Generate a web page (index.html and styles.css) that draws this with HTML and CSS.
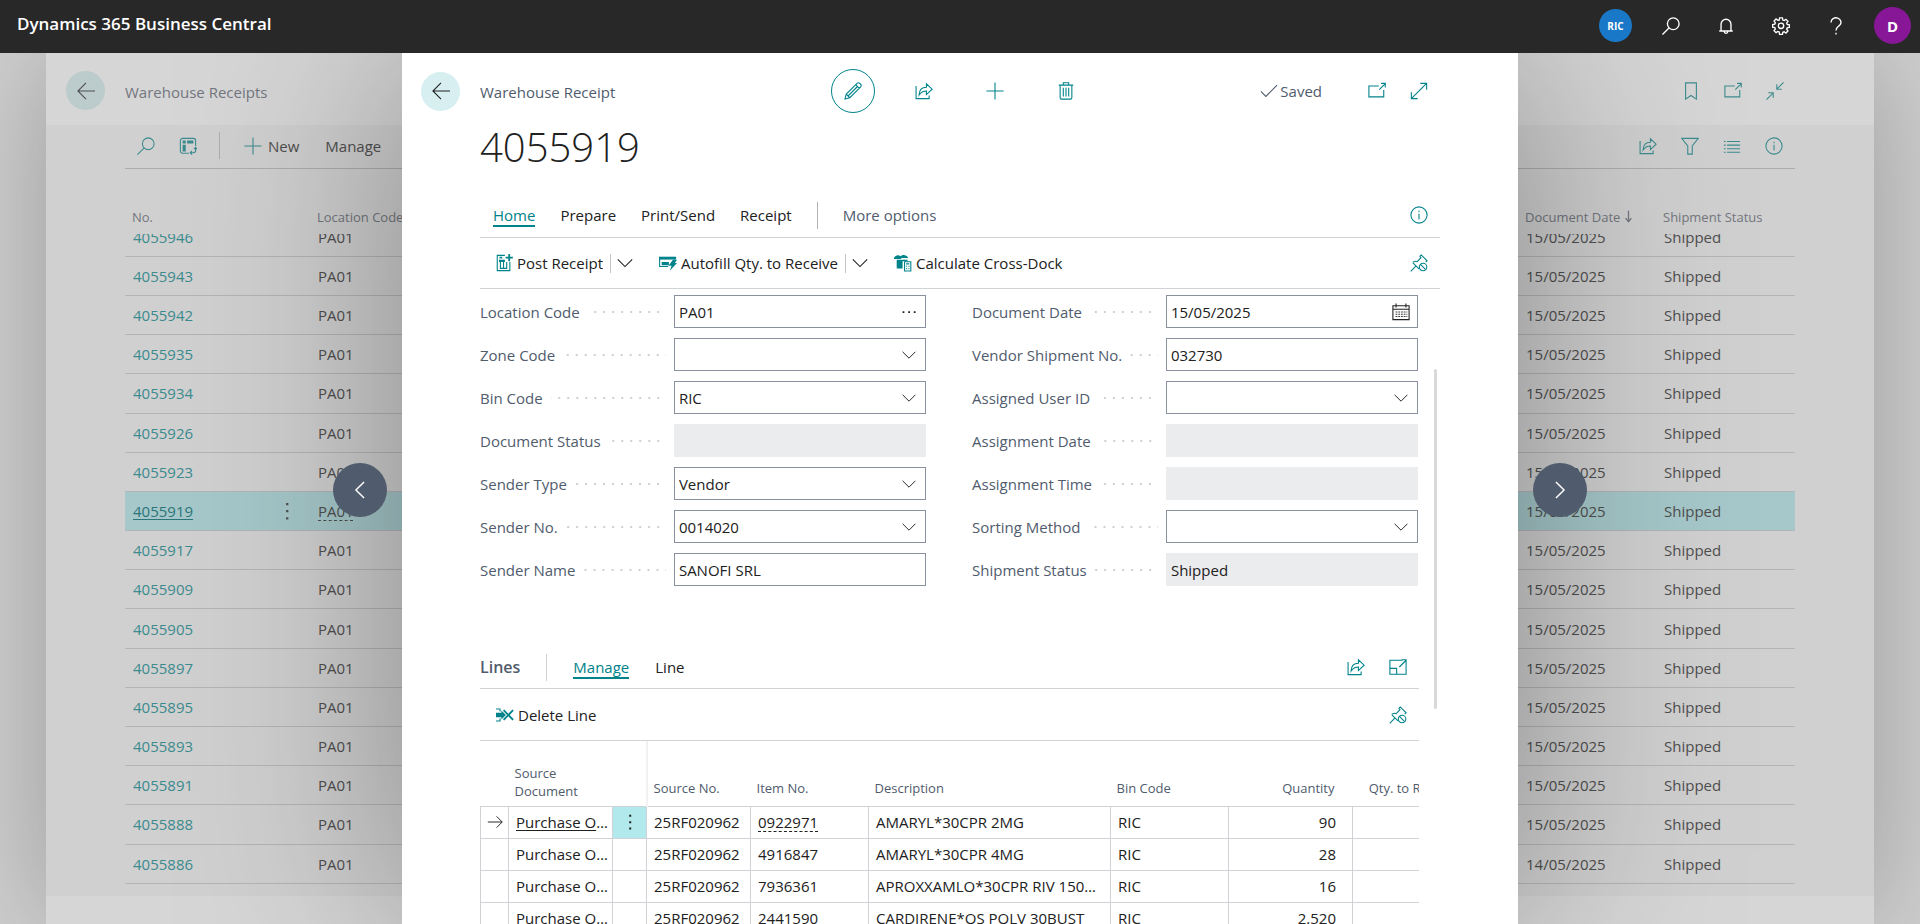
FILE: index.html
```html
<!doctype html>
<html lang="en">
<head>
  <meta charset="UTF-8">
  <title>Warehouse Receipt - 4055919 - Dynamics 365 Business Central</title>
  <meta name="viewport" content="width=device-width, initial-scale=1.0">
  <link rel="stylesheet" href="styles.css">
</head>
<body>

  <!-- icon sprite -->
  <svg class="sprite" aria-hidden="true">
    <symbol id="i-back" viewBox="0 0 20 20"><path d="M20 10H1M10 1 1 10l9 9"/></symbol>
    <symbol id="i-search" viewBox="0 0 20 20"><circle cx="12.500" cy="7.500" r="6.500"/><path d="M8 12 .500 19.500"/></symbol>
    <symbol id="i-bell" viewBox="0 0 20 20"><path d="M4.500 15.500V8a5.500 5.500 0 0 1 11 0v7.500M2.500 15.600h15M8 16.200a2 2 0 0 0 4 0"/></symbol>
    <symbol id="i-gear" viewBox="0 0 20 20"><path d="M8.400 1h3.200l.4 2.400 1.500.6 2-1.400 2.200 2.200-1.400 2 .6 1.500 2.400.4v3l-2.400.4-.6 1.500 1.400 2-2.200 2.200-2-1.400-1.500.6-.4 2.400H8.400L8 16.600 6.500 16l-2 1.400-2.200-2.200 1.400-2-.6-1.500-2.400-.4v-3l2.400-.4.6-1.500-1.400-2 2.200-2.200 2 1.400L8 3.400z"/><circle cx="10" cy="9.800" r="3"/></symbol>
    <symbol id="i-help" viewBox="0 0 20 20"><path d="M4.500 6a5.500 5 0 1 1 9.500 3.300c-2.500 2-4 2.700-4 5.700M10 17.500v2"/></symbol>
    <symbol id="i-analyse" viewBox="0 0 20 20"><path d="M11 18H4a2.500 2.500 0 0 1-2.500-2.500V4A2.500 2.500 0 0 1 4 1.500h12A2.500 2.500 0 0 1 18.500 4v6"/><path class="fill" d="M4 4h3.500v3.200H4zM9 4h7v3.200H9zM4 8.500h3.500V16H4z"/><path d="M18.500 12v3a2.500 2.500 0 0 1-2.500 2.500h-3M16.500 13.500l2-2 1.500 2M14.500 15.500l-2 2 2 2"/></symbol>
    <symbol id="i-plus" viewBox="0 0 20 20"><path d="M10 .500v19M.500 10h19"/></symbol>
    <symbol id="i-bookmark" viewBox="0 0 20 20"><path d="M4 1h12v18l-6-4-6 4z"/></symbol>
    <symbol id="i-popout" viewBox="0 0 20 20"><path d="M12 4.500H1v12h16.500V9M12.500 8.500l6.500-6.500M14.500 1.500h4.700v4.700"/></symbol>
    <symbol id="i-collapse" viewBox="0 0 20 20"><path d="M19.500.500 12 8M12 2.500V8h5.500M.500 19.500 8 12M2.500 12H8v5.500"/></symbol>
    <symbol id="i-expand" viewBox="0 0 20 20"><path d="m1.500 18.500 17-17M11.500 1.500h7v7M1.500 11.500v7h7"/></symbol>
    <symbol id="i-share" viewBox="0 0 20 20"><path d="M1.200 4.500v14h14.500V15M4.500 14.500c.2-6 3-8.700 8.200-8.700V2l6.300 6-6.300 6v-4c-4 0-6 1-8.200 4.500z"/></symbol>
    <symbol id="i-filter" viewBox="0 0 20 20"><path d="M.800 1.500h18.400L12.500 10v9h-5v-9z"/></symbol>
    <symbol id="i-list" viewBox="0 0 20 20"><path d="M1 5h2M4.500 5H19M1 9h2M4.500 9H19M1 13h2M4.500 13H19M1 17h2M4.500 17H19"/></symbol>
    <symbol id="i-info" viewBox="0 0 20 20"><circle cx="10" cy="10" r="9"/><path d="M10 8.500V15M10 5.200V7"/></symbol>
    <symbol id="i-edit" viewBox="0 0 20 20"><path d="m1 19 1.500-5.500L14.500 1.500a2.100 2.100 0 0 1 3 0l1 1a2.100 2.100 0 0 1 0 3L6.500 17.500zM2.500 13.500l4 4M13 3l4 4M15 5 5 15"/></symbol>
    <symbol id="i-trash" viewBox="0 0 20 20"><path d="M2 3.500h16M7 3V.800h6V3M3.500 3.500v14a1.500 1.500 0 0 0 1.500 1.500h10a1.500 1.500 0 0 0 1.500-1.500v-14M7 6.500V16M10 6.500V16M13 6.500V16"/></symbol>
    <symbol id="i-check" viewBox="0 0 20 20"><path d="m1 10.500 5.500 5.500L19 3.500"/></symbol>
    <symbol id="i-chevron" viewBox="0 0 20 20"><path d="m2 6 8 8 8-8"/></symbol>
    <symbol id="i-prev" viewBox="0 0 20 20"><path d="m14.500 1-9 9 9 9"/></symbol>
    <symbol id="i-next" viewBox="0 0 20 20"><path d="m5.500 1 9 9-9 9"/></symbol>
    <symbol id="i-pin" viewBox="0 0 20 20"><path d="M.800 19.200 6.500 13.500M3 9.500c2-1.500 4-1.500 5-1l4.200-4.500L11 2.500 12.500 1 19 7.500 17.500 9M3 9.500l7 7"/><circle cx="14.500" cy="14.500" r="4.200"/><path d="m11.600 11.600 5.800 5.800"/></symbol>
    <symbol id="i-post" viewBox="0 0 20 20"><path d="M11 1.500H2.500v17h14V9"/><path d="M6 9v7h7V9M9.500 9v7"/><path class="fill" d="M5 3h3v2H5zM4.500 6.500h6.500V9H4.500zM14.800 0h2v3h3v2h-3v3h-2V5h-3V3h3z"/></symbol>
    <symbol id="i-autofill" viewBox="0 0 20 20"><path class="fill" d="M0 3h19v3.200H0z"/><path d="M.700 3.500v10.300h9.500"/><path class="fill" d="M3 9h8v3.500H3zM15.500 6.500H20L17.500 10H20l-8 8.500 2-5.500h-3.500z"/></symbol>
    <symbol id="i-crossdock" viewBox="0 0 20 20"><path class="fill" d="M0 4.500C1.500 1 5 .500 7.500 2.500 9.500.500 13.500.500 16 4.500H8v1H0zM3 6.500h12V8H9.500v8H3z"/><path d="M11.700 8.700h7v10.200h-7zM13.500 11h3.500M13.200 13.700h1.200M16 13.700h1.200M13.200 16.300h1.200M16 16.300h1.200"/></symbol>
    <symbol id="i-delline" viewBox="0 0 20 20"><path d="M0 3.300h5M0 16.700h5M4.500 3v3M4.500 14v3"/><path class="fill" d="M0 7.500h6V5l5 5-5 5v-2.500H0z"/><path class="thick" d="m8.500 4.500 10.500 11M19 4.500 8.500 15.500"/></symbol>
    <symbol id="i-enlarge" viewBox="0 0 20 20"><path d="M15 2.500H1v15.500h18V5M1 11.500h7.500V18M11.500 10 19 2.500M14 2h5v5"/></symbol>
    <symbol id="i-calendar" viewBox="0 0 20 20"><path d="M1 3h18v15.500H1zM1 7h18M4.500.500V5M15.500.500V5"/><path class="dotted" d="M4 10h13M4 12.500h13M4 15h13"/></symbol>
    <symbol id="i-row" viewBox="0 0 20 20"><path d="M1 10h18M12 3l7 7-7 7"/></symbol>
    <symbol id="i-more" viewBox="0 0 20 20"><path class="fill" d="M9 1h2.500v2.500H9zM9 9h2.500v2.500H9zM9 17h2.500v2.500H9z"/></symbol>
    <symbol id="i-ellipsis" viewBox="0 0 20 20"><path class="fill" d="M2 9h2.200v2.200H2zM9 9h2.200v2.200H9zM16 9h2.200v2.200H16z"/></symbol>
    <symbol id="i-sort" viewBox="0 0 20 20"><path class="thick" d="M10 1v16M5.500 12.500 10 18l4.500-5.500"/></symbol>
  </svg>

  <header class="topbar">
    <a class="brand" href="#">Dynamics 365 Business Central</a>
    <div class="topbar-tools">
      <button class="env">RIC</button>
      <button aria-label="Search"><svg class="icon"><use href="#i-search"/></svg></button>
      <button aria-label="Notifications"><svg class="icon"><use href="#i-bell"/></svg></button>
      <button aria-label="Settings"><svg class="icon"><use href="#i-gear"/></svg></button>
      <button aria-label="Help"><svg class="icon"><use href="#i-help"/></svg></button>
      <button class="avatar">D</button>
    </div>
  </header>

  <div class="stage">

    <!-- list page behind the card -->
    <section class="list-page">
      <div class="list-head">
        <button class="round-back" aria-label="Back"><svg class="icon"><use href="#i-back"/></svg></button>
        <span class="list-title">Warehouse Receipts</span>
        <div class="icon-group">
          <button aria-label="Bookmark"><svg class="icon"><use href="#i-bookmark"/></svg></button>
          <button aria-label="Open in new window"><svg class="icon"><use href="#i-popout"/></svg></button>
          <button aria-label="Collapse"><svg class="icon"><use href="#i-collapse"/></svg></button>
        </div>
      </div>
      <div class="list-body">
        <div class="list-bar">
          <button aria-label="Search list"><svg class="icon"><use href="#i-search"/></svg></button>
          <button aria-label="Analyse"><svg class="icon"><use href="#i-analyse"/></svg></button>
          <span class="divider"></span>
          <button class="with-text"><svg class="icon"><use href="#i-plus"/></svg>New</button>
          <button class="with-text">Manage</button>
          <div class="icon-group">
            <button aria-label="Share"><svg class="icon"><use href="#i-share"/></svg></button>
            <button aria-label="Filter"><svg class="icon"><use href="#i-filter"/></svg></button>
            <button aria-label="List view"><svg class="icon"><use href="#i-list"/></svg></button>
            <button aria-label="Info"><svg class="icon"><use href="#i-info"/></svg></button>
          </div>
        </div>
        <table class="list-table list-table-head">
          <colgroup><col class="c-no"><col class="c-menu"><col><col class="c-date"><col class="c-status"></colgroup>
          <thead>
            <tr><th>No.</th><th></th><th>Location Code</th><th>Document Date<svg class="icon sort"><use href="#i-sort"/></svg></th><th>Shipment Status</th></tr>
          </thead>
        </table>
        <div class="list-scroll">
          <table class="list-table list-table-rows">
            <colgroup><col class="c-no"><col class="c-menu"><col><col class="c-date"><col class="c-status"></colgroup>
            <tbody>
              <tr><td><a href="#">4055946</a></td><td></td><td>PA01</td><td>15/05/2025</td><td>Shipped</td></tr>
              <tr><td><a href="#">4055943</a></td><td></td><td>PA01</td><td>15/05/2025</td><td>Shipped</td></tr>
              <tr><td><a href="#">4055942</a></td><td></td><td>PA01</td><td>15/05/2025</td><td>Shipped</td></tr>
              <tr><td><a href="#">4055935</a></td><td></td><td>PA01</td><td>15/05/2025</td><td>Shipped</td></tr>
              <tr><td><a href="#">4055934</a></td><td></td><td>PA01</td><td>15/05/2025</td><td>Shipped</td></tr>
              <tr><td><a href="#">4055926</a></td><td></td><td>PA01</td><td>15/05/2025</td><td>Shipped</td></tr>
              <tr><td><a href="#">4055923</a></td><td></td><td>PA01</td><td>15/05/2025</td><td>Shipped</td></tr>
              <tr class="selected"><td><a href="#">4055919</a></td><td><button aria-label="Row menu"><svg class="icon"><use href="#i-more"/></svg></button></td><td><span class="lookup">PA01</span></td><td>15/05/2025</td><td>Shipped</td></tr>
              <tr><td><a href="#">4055917</a></td><td></td><td>PA01</td><td>15/05/2025</td><td>Shipped</td></tr>
              <tr><td><a href="#">4055909</a></td><td></td><td>PA01</td><td>15/05/2025</td><td>Shipped</td></tr>
              <tr><td><a href="#">4055905</a></td><td></td><td>PA01</td><td>15/05/2025</td><td>Shipped</td></tr>
              <tr><td><a href="#">4055897</a></td><td></td><td>PA01</td><td>15/05/2025</td><td>Shipped</td></tr>
              <tr><td><a href="#">4055895</a></td><td></td><td>PA01</td><td>15/05/2025</td><td>Shipped</td></tr>
              <tr><td><a href="#">4055893</a></td><td></td><td>PA01</td><td>15/05/2025</td><td>Shipped</td></tr>
              <tr><td><a href="#">4055891</a></td><td></td><td>PA01</td><td>15/05/2025</td><td>Shipped</td></tr>
              <tr><td><a href="#">4055888</a></td><td></td><td>PA01</td><td>15/05/2025</td><td>Shipped</td></tr>
              <tr><td><a href="#">4055886</a></td><td></td><td>PA01</td><td>14/05/2025</td><td>Shipped</td></tr>
            </tbody>
          </table>
        </div>
      </div>
    </section>

    <!-- card dialog -->
    <main class="card">
      <div class="card-head">
        <button class="round-back" aria-label="Back"><svg class="icon"><use href="#i-back"/></svg></button>
        <span class="caption">Warehouse Receipt</span>
        <div class="card-tools">
          <button class="tool edit" aria-label="Edit"><svg class="icon"><use href="#i-edit"/></svg></button>
          <button class="tool" aria-label="Share"><svg class="icon"><use href="#i-share"/></svg></button>
          <button class="tool" aria-label="New"><svg class="icon"><use href="#i-plus"/></svg></button>
          <button class="tool" aria-label="Delete"><svg class="icon"><use href="#i-trash"/></svg></button>
          <span class="saved"><svg class="icon"><use href="#i-check"/></svg>Saved</span>
          <div class="icon-group">
            <button aria-label="Open in new window"><svg class="icon"><use href="#i-popout"/></svg></button>
            <button aria-label="Expand"><svg class="icon"><use href="#i-expand"/></svg></button>
          </div>
        </div>
      </div>

      <div class="card-main">
        <h1>4055919</h1>

        <nav class="tabs">
          <button class="tab active">Home</button>
          <button class="tab">Prepare</button>
          <button class="tab">Print/Send</button>
          <button class="tab">Receipt</button>
          <span class="divider"></span>
          <button class="tab muted">More options</button>
          <button class="bar-end" aria-label="Info"><svg class="icon"><use href="#i-info"/></svg></button>
        </nav>

        <div class="actions">
          <button class="action"><svg class="icon"><use href="#i-post"/></svg>Post Receipt</button>
          <button class="split" aria-label="More posting actions"><svg class="icon"><use href="#i-chevron"/></svg></button>
          <button class="action"><svg class="icon"><use href="#i-autofill"/></svg>Autofill Qty. to Receive</button>
          <button class="split" aria-label="More autofill actions"><svg class="icon"><use href="#i-chevron"/></svg></button>
          <button class="action"><svg class="icon"><use href="#i-crossdock"/></svg>Calculate Cross-Dock</button>
          <button class="bar-end" aria-label="Unpin"><svg class="icon"><use href="#i-pin"/></svg></button>
        </div>

        <div class="card-scroll">
          <form class="fields">
            <div class="column">
              <div class="field">
                <span class="name"><label for="location">Location Code</label></span>
                <div class="box"><input id="location" type="text" value="PA01"><button type="button" aria-label="Look up"><svg class="icon"><use href="#i-ellipsis"/></svg></button></div>
              </div>
              <div class="field">
                <span class="name"><label for="zone">Zone Code</label></span>
                <div class="box"><input id="zone" type="text"><button type="button" aria-label="Look up"><svg class="icon"><use href="#i-chevron"/></svg></button></div>
              </div>
              <div class="field">
                <span class="name"><label for="bin">Bin Code</label></span>
                <div class="box"><input id="bin" type="text" value="RIC"><button type="button" aria-label="Look up"><svg class="icon"><use href="#i-chevron"/></svg></button></div>
              </div>
              <div class="field">
                <span class="name"><label for="docstatus">Document Status</label></span>
                <div class="box readonly"><input id="docstatus" type="text" readonly></div>
              </div>
              <div class="field">
                <span class="name"><label for="sendertype">Sender Type</label></span>
                <div class="box"><select id="sendertype"><option>Vendor</option></select><svg class="icon"><use href="#i-chevron"/></svg></div>
              </div>
              <div class="field">
                <span class="name"><label for="senderno">Sender No.</label></span>
                <div class="box"><input id="senderno" type="text" value="0014020"><button type="button" aria-label="Look up"><svg class="icon"><use href="#i-chevron"/></svg></button></div>
              </div>
              <div class="field">
                <span class="name"><label for="sendername">Sender Name</label></span>
                <div class="box"><input id="sendername" type="text" value="SANOFI SRL"></div>
              </div>
            </div>
            <div class="column">
              <div class="field">
                <span class="name"><label for="docdate">Document Date</label></span>
                <div class="box"><input id="docdate" type="text" value="15/05/2025"><button type="button" aria-label="Pick a date"><svg class="icon wide"><use href="#i-calendar"/></svg></button></div>
              </div>
              <div class="field">
                <span class="name"><label for="vendorship">Vendor Shipment No.</label></span>
                <div class="box"><input id="vendorship" type="text" value="032730"></div>
              </div>
              <div class="field">
                <span class="name"><label for="user">Assigned User ID</label></span>
                <div class="box"><input id="user" type="text"><button type="button" aria-label="Look up"><svg class="icon"><use href="#i-chevron"/></svg></button></div>
              </div>
              <div class="field">
                <span class="name"><label for="asdate">Assignment Date</label></span>
                <div class="box readonly"><input id="asdate" type="text" readonly></div>
              </div>
              <div class="field">
                <span class="name"><label for="astime">Assignment Time</label></span>
                <div class="box readonly"><input id="astime" type="text" readonly></div>
              </div>
              <div class="field">
                <span class="name"><label for="sorting">Sorting Method</label></span>
                <div class="box"><select id="sorting"><option></option></select><svg class="icon"><use href="#i-chevron"/></svg></div>
              </div>
              <div class="field">
                <span class="name"><label for="shipstatus">Shipment Status</label></span>
                <div class="box readonly"><input id="shipstatus" type="text" value="Shipped" readonly></div>
              </div>
            </div>
          </form>

          <section class="lines">
            <div class="lines-head">
              <h2>Lines</h2>
              <span class="divider"></span>
              <button class="tab active">Manage</button>
              <button class="tab">Line</button>
              <div class="icon-group">
                <button aria-label="Share lines"><svg class="icon"><use href="#i-share"/></svg></button>
                <button aria-label="Enlarge lines"><svg class="icon"><use href="#i-enlarge"/></svg></button>
              </div>
            </div>
            <div class="lines-actions">
              <button class="action"><svg class="icon"><use href="#i-delline"/></svg>Delete Line</button>
              <button class="bar-end" aria-label="Unpin"><svg class="icon"><use href="#i-pin"/></svg></button>
            </div>
            <div class="grid-scroll">
              <table class="grid">
                <colgroup><col class="g-arrow"><col class="g-doc"><col class="g-menu"><col class="g-source"><col class="g-item"><col class="g-desc"><col class="g-bin"><col class="g-qty"><col class="g-qty"></colgroup>
                <thead>
                  <tr><th></th><th class="wrap">Source Document</th><th class="freeze"></th><th>Source No.</th><th>Item No.</th><th>Description</th><th>Bin Code</th><th class="num">Quantity</th><th class="num">Qty. to Receive</th></tr>
                </thead>
                <tbody>
                  <tr class="current"><td class="mark"><svg class="icon"><use href="#i-row"/></svg></td><td>Purchase Order</td><td class="menu"><button aria-label="Row menu"><svg class="icon"><use href="#i-more"/></svg></button></td><td>25RF020962</td><td><span class="lookup">0922971</span></td><td>AMARYL*30CPR 2MG</td><td>RIC</td><td class="num">90</td><td></td></tr>
                  <tr><td></td><td>Purchase Order</td><td></td><td>25RF020962</td><td>4916847</td><td>AMARYL*30CPR 4MG</td><td>RIC</td><td class="num">28</td><td></td></tr>
                  <tr><td></td><td>Purchase Order</td><td></td><td>25RF020962</td><td>7936361</td><td>APROXXAMLO*30CPR RIV 150MG</td><td>RIC</td><td class="num">16</td><td></td></tr>
                  <tr><td></td><td>Purchase Order</td><td></td><td>25RF020962</td><td>2441590</td><td>CARDIRENE*OS POLV 30BUST</td><td>RIC</td><td class="num">2.520</td><td></td></tr>
                </tbody>
              </table>
            </div>
          </section>
        </div>
      </div>
      <span class="scroll-thumb"></span>
      <button class="pager prev" aria-label="Previous"><svg class="icon"><use href="#i-prev"/></svg></button>
      <button class="pager next" aria-label="Next"><svg class="icon"><use href="#i-next"/></svg></button>
    </main>
  </div>

</body>
</html>
```
FILE: styles.css
```css
* { box-sizing: border-box; }

body {
  margin: 0;
  height: 100vh;
  display: flex;
  flex-direction: column;
  overflow: hidden;
  font-family: "Open Sans", "Noto Sans", sans-serif;
  font-size: 15px;
  line-height: 20px;
  color: #212121;
}

button {
  display: flex;
  align-items: center;
  justify-content: center;
  padding: 0;
  border: 0;
  background: none;
  font: inherit;
  color: inherit;
  white-space: nowrap;
  cursor: pointer;
}

a { color: inherit; text-decoration: none; }

.sprite { display: none; }

.icon {
  width: 18px;
  height: 18px;
  flex: none;
  fill: none;
  stroke: currentColor;
  stroke-width: 1.2;
}

.fill { fill: currentColor; stroke: none; }
.thick { stroke-width: 2; }
.dotted { stroke-dasharray: 2 1; stroke-width: 1; }

.icon-group {
  display: flex;
  align-items: center;
  gap: 24px;
  margin-left: auto;
}

.divider {
  width: 1px;
  height: 27px;
  background: #b0b2b7;
}

.lookup {
  text-decoration: underline dashed 1px;
  text-underline-offset: 3px;
}

/* top bar */
.topbar {
  position: relative;
  z-index: 2;
  flex: none;
  height: 53px;
  display: flex;
  align-items: center;
  justify-content: space-between;
  padding: 0 9px 2px 17px;
  background: #282828;
  color: #fff;
}

.brand {
  font-size: 17px;
  font-weight: 600;
  padding-bottom: 3px;
}

.topbar-tools {
  display: flex;
  align-items: center;
  gap: 37px;
}

.env {
  width: 33px;
  height: 33px;
  margin-right: -7px;
  border-radius: 50%;
  background: #1a78c8;
  font-size: 10px;
  font-weight: 700;
}

.avatar {
  width: 37px;
  height: 37px;
  margin-left: -8px;
  border-radius: 50%;
  background: #881798;
  font-weight: 700;
}

.topbar-tools .icon { stroke-width: 1.5; }

/* list page */
.stage {
  position: relative;
  flex: 1;
  display: flex;
  overflow: hidden;
  background: #d0d0d0;
}

.list-page {
  flex: 1;
  margin: 0 46px;
  display: flex;
  flex-direction: column;
  background: #d6d6d6;
  color: #4f4f4f;
  box-shadow: 0 0 120px rgba(0, 0, 0, 0.26);
}

.list-head {
  display: flex;
  align-items: center;
  height: 72px;
  padding: 3px 90px 0 20px;
}

.list-head .icon-group, .list-bar .icon-group { color: #3c8b8e; }

.round-back {
  width: 39px;
  height: 39px;
  border-radius: 50%;
  background: #d8eff1;
}

.list-page .round-back { background: #bccbcc; }

.list-title {
  margin-left: 20px;
  padding-top: 3px;
  color: #73777f;
}

.list-body {
  padding: 0 79px;
  height: 771px;
  background: #d0d0d0;
}

.list-bar {
  display: flex;
  align-items: center;
  gap: 24px;
  height: 44px;
  padding: 0 12px 2px;
  border-bottom: 1px solid #abadb0;
}

.list-bar .icon { color: #3c8b8e; }
.list-bar .divider { margin-left: -2px; background: #abadb0; }
.with-text { gap: 6px; }
.with-text + .with-text { margin-left: 2px; }

.list-table {
  width: 100%;
  table-layout: fixed;
  border-collapse: collapse;
}

.c-no { width: 139px; }
.c-menu { width: 46px; }
.c-date { width: 138px; }
.c-status { width: 139px; }

.list-table th {
  height: 65px;
  padding: 31px 7px 0;
  text-align: left;
  font-size: 13px;
  font-weight: 400;
  color: #73777f;
  white-space: nowrap;
}

.sort { width: 13px; height: 13px; margin-left: 2px; vertical-align: -1px; }

/* the first row is scrolled half out of view */
.list-scroll {
  display: flex;
  flex-direction: column;
  justify-content: flex-end;
  height: 650px;
  overflow: hidden;
}

.list-table-rows { height: 666px; flex: none; }

.list-table td {
  padding: 0 8px;
  border-bottom: 1px solid #b3b4b7;
}

.list-table td a { color: #3c8b8e; }
.list-table .selected { background: #a6c8ca; }
.list-table .selected a { color: #2c7679; text-decoration: underline; text-underline-offset: 2px; }
.list-table button { margin-left: 6px; }

/* card */
.card {
  position: absolute;
  inset: 0 402px;
  display: flex;
  flex-direction: column;
  background: #fff;
  box-shadow: 0 0 200px rgba(0, 0, 0, 0.36);
}

.card-head {
  display: grid;
  grid-template-columns: 39px 5fr 9fr;
  column-gap: 20px;
  align-items: center;
  margin-top: 16px;
  padding: 0 90px 0 19px;
}

.caption { padding-top: 2px; color: #505c6d; }

.card-tools {
  display: flex;
  align-items: center;
  gap: 27px;
  color: #00838a;
}

.tool { width: 44px; height: 44px; }
.edit { border: 1px solid #00838a; border-radius: 50%; }

.saved {
  display: flex;
  align-items: center;
  gap: 2px;
  margin-left: auto;
  margin-right: 19px;
  color: #505c6d;
}

.card-tools .icon-group { margin-left: 0; }

.card-main {
  flex: 1;
  min-height: 0;
  display: flex;
  flex-direction: column;
  padding: 0 78px;
}

h1 {
  margin: 0;
  padding-bottom: 17px;
  font-size: 40px;
  line-height: 67px;
  font-weight: 300;
}

.tabs, .actions {
  flex: none;
  display: flex;
  align-items: center;
  border-bottom: 1px solid #d0d2d6;
  padding: 0 12px 0 13px;
}

.tabs { height: 41px; gap: 25px; padding-bottom: 4px; }

.tab {
  padding-top: 1px;
  border-bottom: 2px solid transparent;
  line-height: 20px;
}

.active { color: #00838a; border-color: #00838a; }
.muted { color: #505c6d; }
.bar-end { margin-left: auto; color: #00838a; }

.actions { height: 51px; padding-left: 15px; }
.action { gap: 4px; }
.action .icon { color: #00838a; }

.split {
  height: 19px;
  margin: 0 25px 0 7px;
  padding-left: 5px;
  border-left: 1px solid #c4c6ca;
}

.card-scroll { flex: 1; min-height: 0; overflow: hidden; padding: 6px 21px 0 0; }

/* fields */
.fields {
  display: grid;
  grid-template-columns: 1fr 1fr;
  gap: 46px;
  padding-right: 1px;
}

.column { display: grid; gap: 10px; }

.field {
  display: grid;
  grid-template-columns: 10fr 13fr;
  height: 33px;
}

.name {
  display: flex;
  align-items: center;
  gap: 8px;
  margin-right: 8px;
  color: #505c6d;
}

/* dotted leader between label and box */
.name::after {
  content: "";
  flex: 1;
  height: 2px;
  background: linear-gradient(90deg, #d0d0d0 2px, transparent 2px) right / 9px 2px repeat-x;
}

.box {
  display: grid;
  grid-template-columns: 1fr 32px;
  align-items: center;
  border: 1px solid #8a919e;
  background: #fff;
}

.box input, .box select {
  grid-column: 1 / 3;
  grid-row: 1;
  width: 100%;
  height: 31px;
  padding: 0 4px;
  border: 0;
  background: none;
  appearance: none;
  font: inherit;
  color: #212121;
}

.box button, .box > .icon {
  grid-column: 2;
  grid-row: 1;
  justify-self: center;
  pointer-events: none;
}

.box .icon { width: 16px; height: 16px; }
.box .wide { width: 18px; height: 18px; }
.readonly { border-color: #ebecee; background: #ebecee; }

/* lines */
.lines { margin-top: 60px; }

.lines-head, .lines-actions {
  display: flex;
  align-items: center;
  border-bottom: 1px solid #d0d2d6;
  padding-right: 12px;
}

.lines-head { height: 43px; gap: 26px; }
.lines-head .divider { background: #d0d2d6; }

h2 {
  margin: 0;
  font-size: 16px;
  font-weight: 600;
  color: #505c6d;
}

.lines-head .icon-group { color: #00838a; }
.lines-actions { height: 52px; padding-left: 16px; }

.grid-scroll { overflow: hidden; }

.grid {
  width: 996px;
  table-layout: fixed;
  border-collapse: collapse;
}

.g-arrow { width: 28px; }
.g-doc { width: 104px; }
.g-menu { width: 34px; }
.g-source { width: 104px; }
.g-item, .g-bin { width: 118px; }
.g-desc { width: 242px; }
.g-qty { width: 124px; }

.grid th {
  height: 65px;
  padding: 0 6px 9px;
  vertical-align: bottom;
  text-align: left;
  font-size: 13px;
  line-height: 18px;
  font-weight: 400;
  color: #505c6d;
  white-space: nowrap;
}

.grid th.wrap { white-space: normal; padding-bottom: 6px; padding-right: 20px; }
.grid th.freeze { border-right: 2px solid #f2f2f2; }
.grid th.num { padding-right: 18px; }

.grid td {
  height: 32px;
  padding: 0 4px 0 7px;
  border: 1px solid #d0d2d6;
  overflow: hidden;
  text-overflow: ellipsis;
  white-space: nowrap;
}

.grid .num { text-align: right; }
.grid td.num { padding-right: 16px; }
.current td:nth-child(2) { text-decoration: underline; text-underline-offset: 2px; }
.grid .mark, .grid .menu { padding: 0; }
.mark .icon { display: block; width: 16px; height: 16px; margin: 0 auto; }
.menu { background: #b2e9ec; }
.menu button { width: 100%; }
.menu .icon { width: 16px; height: 16px; }

.scroll-thumb {
  position: absolute;
  right: 81px;
  top: 316px;
  width: 3px;
  height: 340px;
  border-radius: 2px;
  background: #d9d9d9;
}

/* previous / next record */
.pager {
  position: absolute;
  top: 410px;
  width: 54px;
  height: 54px;
  border-radius: 50%;
  background: #505c6d;
  color: #fff;
}

.prev { left: -69px; }
.next { right: -69px; }
.pager .icon { stroke-width: 1.6; }
```
